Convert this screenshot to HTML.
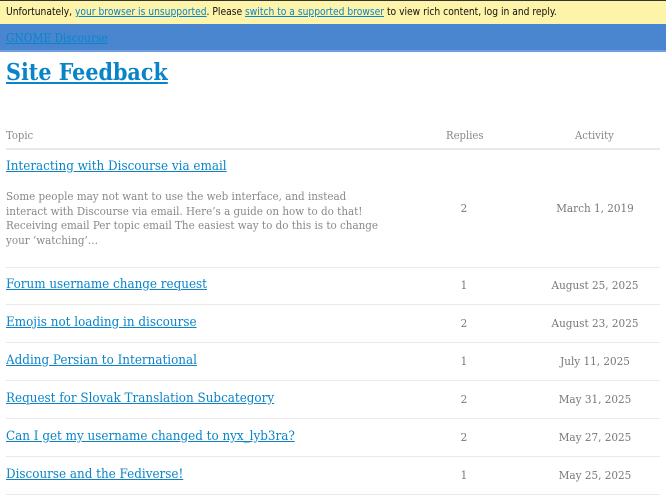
<!DOCTYPE html>
<html><head><meta charset="utf-8"><style>
*{margin:0;padding:0;box-sizing:border-box}
body{width:666px;height:500px;overflow:hidden;background:#fff;font-family:"DejaVu Serif Condensed","DejaVu Serif",serif;font-stretch:condensed;position:relative}
.ban{position:absolute;left:0;top:0;width:666px;height:24px;background:#fdf3a9;border-top:1px solid #333;font-family:"DejaVu Sans Condensed","DejaVu Sans",sans-serif;font-stretch:condensed;font-size:10.2px;line-height:23px;padding-left:6px;color:#111}
.ban a{color:#0a84c9}
.hdr{position:absolute;left:0;top:24px;width:666px;height:28px;background:#4a86cf;border-bottom:2px solid #6f9fe0;font-size:11.8px;line-height:28px;padding-left:6px}
.hdr a{color:#0a84c9}
h1{position:absolute;left:6px;top:59px;font-size:23px;font-weight:bold}
a{color:#0a84c9;text-decoration:underline}
.th{position:absolute;top:129px;font-size:11.2px;color:#888}
.line{position:absolute;left:6px;width:654px;height:1px;background:#e9e9e9}
.t{position:absolute;left:6px;font-size:13.3px}
.n,.d{position:absolute;font-size:11.6px;color:#777;text-align:center}
.n{left:444px;width:40px}
.d{left:530px;width:130px}
.ex{position:absolute;left:6px;top:189px;width:381px;font-size:11.5px;line-height:14.7px;color:#888}
</style></head><body>
<div class="ban">Unfortunately, <a>your browser is unsupported</a>. Please <a>switch to a supported browser</a> to view rich content, log in and reply.</div>
<div class="hdr"><a>GNOME Discourse</a></div>
<h1><a>Site Feedback</a></h1>
<div class="th" style="left:6px">Topic</div>
<div class="th" style="left:446px">Replies</div>
<div class="th" style="left:575px">Activity</div>
<div class="line" style="top:148px;height:2px"></div>
<div class="t" style="top:159px"><a>Interacting with Discourse via email</a></div>
<div class="ex">Some people may not want to use the web interface, and instead<br>interact with Discourse via email. Here’s a guide on how to do that!<br>Receiving email Per topic email The easiest way to do this is to change<br>your ‘watching’…</div>
<div class="n" style="top:201px">2</div><div class="d" style="top:201px">March 1, 2019</div>
<div class="line" style="top:267px"></div>
<div class="t" style="top:277px"><a>Forum username change request</a></div><div class="n" style="top:278px">1</div><div class="d" style="top:278px">August 25, 2025</div>
<div class="line" style="top:304px"></div>
<div class="t" style="top:315px"><a>Emojis not loading in discourse</a></div><div class="n" style="top:316px">2</div><div class="d" style="top:316px">August 23, 2025</div>
<div class="line" style="top:342px"></div>
<div class="t" style="top:353px"><a>Adding Persian to International</a></div><div class="n" style="top:354px">1</div><div class="d" style="top:354px">July 11, 2025</div>
<div class="line" style="top:380px"></div>
<div class="t" style="top:391px"><a>Request for Slovak Translation Subcategory</a></div><div class="n" style="top:392px">2</div><div class="d" style="top:392px">May 31, 2025</div>
<div class="line" style="top:418px"></div>
<div class="t" style="top:429px"><a>Can I get my username changed to nyx_lyb3ra?</a></div><div class="n" style="top:430px">2</div><div class="d" style="top:430px">May 27, 2025</div>
<div class="line" style="top:456px"></div>
<div class="t" style="top:467px"><a>Discourse and the Fediverse!</a></div><div class="n" style="top:468px">1</div><div class="d" style="top:468px">May 25, 2025</div>
<div class="line" style="top:494px"></div>
</body></html>
